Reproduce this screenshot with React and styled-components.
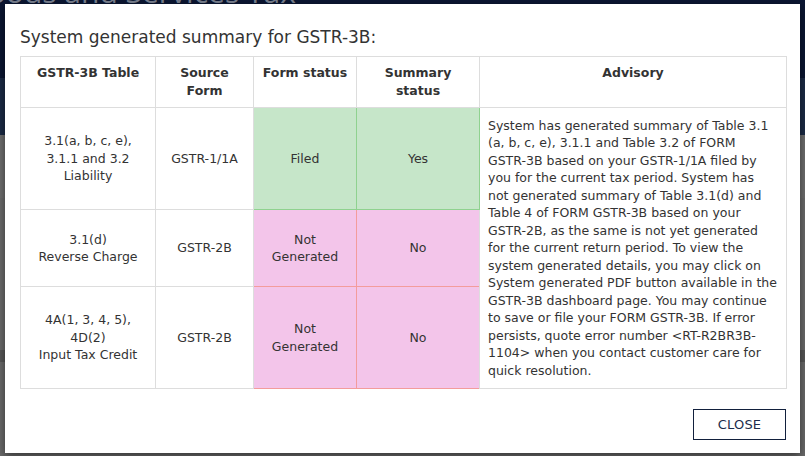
import React from "react";
import styled, { createGlobalStyle } from "styled-components";

const GlobalStyle = createGlobalStyle`
  html, body { margin: 0; padding: 0; }
  body {
    font-family: "DejaVu Sans", Verdana, sans-serif;
    background: #6c6c6c;
  }
`;

const Screen = styled.div`
  position: relative;
  width: 805px;
  height: 456px;
  overflow: hidden;
  display: flex;
  flex-direction: column;
  background: #6c6c6c;
`;

const Header = styled.header`
  height: 78px;
  flex: none;
  background: #0b1632;
  overflow: hidden;
`;

const HeaderTitle = styled.div`
  margin: -24px 0 0 -34px;
  font-family: "Open Sans", "DejaVu Sans", sans-serif;
  font-size: 30px;
  line-height: 32px;
  color: #7a8190;
  white-space: nowrap;
`;

const Nav = styled.nav`
  height: 57px;
  flex: none;
  background: #1b2a45;
`;

const Main = styled.main`
  flex: 1;
  display: flex;
  flex-direction: column;
  background: #6c6c6c;
`;

const MainBand = styled.div`
  height: ${(p) => p.$h}px;
  flex: none;
  background: ${(p) => p.$bg};
`;

const Modal = styled.div`
  position: absolute;
  top: 4px;
  left: 5px;
  width: 795px;
  height: 449px;
  box-sizing: border-box;
  background: #fff;
  box-shadow: 0 3px 9px rgba(0, 0, 0, 0.5);
  padding: 21px 14px 14px 15px;
  display: flex;
  flex-direction: column;
  color: #333;
`;

const Title = styled.h4`
  margin: 0 0 7px 0;
  font-size: 17px;
  line-height: 24px;
  font-weight: normal;
  color: #333;
`;

const Table = styled.table`
  width: 766px;
  border-collapse: collapse;
  table-layout: fixed;
  font-size: 12.5px;
  line-height: 17.5px;
  color: #333;
`;

const Th = styled.th`
  border: 1px solid #dddddd;
  padding: 7px 6px 7px;
  vertical-align: top;
  text-align: center;
  font-weight: bold;
  line-height: 18px;
  color: #333;
`;

const tones = {
  plain: { bg: "#ffffff", line: "#dddddd" },
  ok: { bg: "#c6e6c9", line: "#8fd28f" },
  bad: { bg: "#f3c5ea", line: "#f39c9c" },
};

const Row = styled.tr`
  height: ${(p) => p.$h}px;
`;

const Td = styled.td`
  border: 1px solid ${(p) => tones[p.$tone || "plain"].line};
  background: ${(p) => tones[p.$tone || "plain"].bg};
  padding: 8px;
  text-align: center;
  vertical-align: middle;
`;

const Advisory = styled.td`
  border: 1px solid #dddddd;
  background: #fff;
  padding: 8px;
  text-align: left;
  vertical-align: middle;
  white-space: nowrap;
`;

const Footer = styled.div`
  display: flex;
  justify-content: flex-end;
  margin-top: 20px;
`;

const CloseButton = styled.button`
  width: 93px;
  height: 31px;
  box-sizing: border-box;
  background: #fff;
  border: 1.5px solid #12203d;
  border-radius: 0;
  color: #1c2c4c;
  font-family: "DejaVu Sans", Verdana, sans-serif;
  font-size: 13px;
  letter-spacing: 0.2px;
  cursor: pointer;
`;

const rows = [
  {
    h: 102,
    table: ["3.1(a, b, c, e),", "3.1.1 and 3.2", "Liability"],
    source: "GSTR-1/1A",
    form: ["Filed"],
    summary: "Yes",
    tone: "ok",
  },
  {
    h: 77,
    table: ["3.1(d)", "Reverse Charge"],
    source: "GSTR-2B",
    form: ["Not", "Generated"],
    summary: "No",
    tone: "bad",
  },
  {
    h: 102,
    table: ["4A(1, 3, 4, 5),", "4D(2)", "Input Tax Credit"],
    source: "GSTR-2B",
    form: ["Not", "Generated"],
    summary: "No",
    tone: "bad",
  },
];

const advisory = [
  "System has generated summary of Table 3.1",
  "(a, b, c, e), 3.1.1 and Table 3.2 of FORM",
  "GSTR-3B based on your GSTR-1/1A filed by",
  "you for the current tax period. System has",
  "not generated summary of Table 3.1(d) and",
  "Table 4 of FORM GSTR-3B based on your",
  "GSTR-2B, as the same is not yet generated",
  "for the current return period. To view the",
  "system generated details, you may click on",
  "System generated PDF button available in the",
  "GSTR-3B dashboard page. You may continue",
  "to save or file your FORM GSTR-3B. If error",
  "persists, quote error number <RT-R2BR3B-",
  "1104> when you contact customer care for",
  "quick resolution.",
];

const Lines = ({ items }) =>
  items.map((t, i) => (
    <React.Fragment key={i}>
      {i > 0 && <br />}
      {t}
    </React.Fragment>
  ));

export default function App() {
  return (
    <>
      <GlobalStyle />
      <Screen>
        <Header>
          <HeaderTitle>Goods and Services Tax</HeaderTitle>
        </Header>
        <Nav />
        <Main>
          <MainBand $h={63} $bg="#6e6e6e" />
          <MainBand $h={152} $bg="#6b6b6b" />
          <MainBand $h={12} $bg="#575757" />
          <MainBand $h={94} $bg="#6a6a6a" />
        </Main>

        <Modal role="dialog">
          <Title>System generated summary for GSTR-3B:</Title>
          <Table>
            <colgroup>
              <col style={{ width: 135 }} />
              <col style={{ width: 98 }} />
              <col style={{ width: 103 }} />
              <col style={{ width: 123 }} />
              <col style={{ width: 307 }} />
            </colgroup>
            <thead>
              <tr>
                <Th>GSTR-3B Table</Th>
                <Th>
                  Source
                  <br />
                  Form
                </Th>
                <Th>Form status</Th>
                <Th>
                  Summary
                  <br />
                  status
                </Th>
                <Th>Advisory</Th>
              </tr>
            </thead>
            <tbody>
              {rows.map((r, i) => (
                <Row key={i} $h={r.h}>
                  <Td>
                    <Lines items={r.table} />
                  </Td>
                  <Td>{r.source}</Td>
                  <Td $tone={r.tone}>
                    <Lines items={r.form} />
                  </Td>
                  <Td $tone={r.tone}>{r.summary}</Td>
                  {i === 0 && (
                    <Advisory rowSpan={3}>
                      <Lines items={advisory} />
                    </Advisory>
                  )}
                </Row>
              ))}
            </tbody>
          </Table>
          <Footer>
            <CloseButton type="button">CLOSE</CloseButton>
          </Footer>
        </Modal>
      </Screen>
    </>
  );
}
